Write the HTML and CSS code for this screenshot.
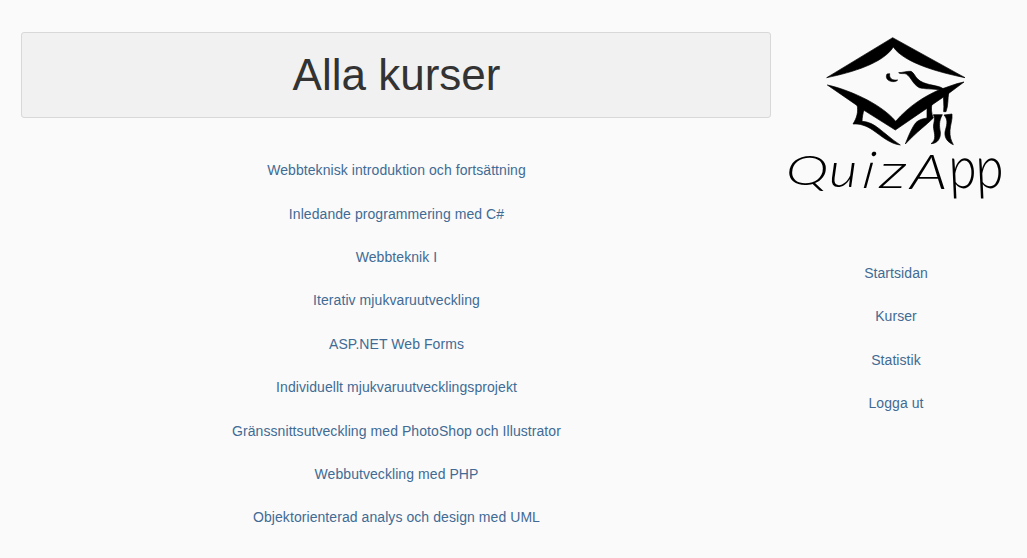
FILE: index.html
```html
<!DOCTYPE html>
<html lang="sv">
<head>
<meta charset="utf-8">
<title>QuizApp – Alla kurser</title>
<link rel="stylesheet" href="styles.css">
</head>
<body>
<div class="page">
  <main class="content">
    <header class="panel"><h1 class="title">Alla kurser</h1></header>
    <ul class="links courses">
      <li><a href="#">Webbteknisk introduktion och fortsättning</a></li>
      <li><a href="#">Inledande programmering med C#</a></li>
      <li><a href="#">Webbteknik I</a></li>
      <li><a href="#">Iterativ mjukvaruutveckling</a></li>
      <li><a href="#">ASP.NET Web Forms</a></li>
      <li><a href="#">Individuellt mjukvaruutvecklingsprojekt</a></li>
      <li><a href="#">Gränssnittsutveckling med PhotoShop och Illustrator</a></li>
      <li><a href="#">Webbutveckling med PHP</a></li>
      <li><a href="#">Objektorienterad analys och design med UML</a></li>
    </ul>
  </main>
  <aside class="sidebar">
    <svg class="logo" viewBox="0 0 720 570" role="img" aria-label="QuizApp">
      <g class="cap">
        <!-- top edges of the board -->
        <path d="M140 158 L338 38 L555 158 C480 143 372 114 340 66 C310 114 218 142 140 158Z"/>
        <!-- lower edges of the board -->
        <path d="M142 180 C195 191 300 232 347 289 C388 242 430 216 478 194 C500 188 524 176 552 171 L505 206 L346 315 L252 256 L232 242Z"/>
        <!-- button and cord -->
        <path d="M321 147 L329 146 C327 160 336 167 353 165 C349 170 340 171 333 169 C321 166 316 157 321 147Z"/>
        <path d="M356 143 C369 143 380 138 393 139 C403 144 404 154 414 163 C432 180 463 179 485 188 L506 204 C503 222 505 242 498 260 L491 260 C493 240 489 220 491 206 L477 194 C458 191 434 193 418 188 C398 178 394 157 379 147 C371 144 361 148 356 143Z"/>
        <!-- cap sides -->
        <path d="M231 238 L253 252 C248 266 247 277 246 289 C287 291 305 323 361 360 C330 357 303 332 278 315 C257 301 240 296 219 297 C230 279 236 262 231 238Z"/>
        <path d="M441 247 L456 236 C453 249 454 266 460 279 C437 302 413 318 376 357 C386 331 393 315 403 299 C412 285 425 282 441 279Z"/>
        <!-- tassel -->
        <path d="M460 269 L487 269 C476 289 478 303 481 321 C483 340 472 356 453 356 C470 345 463 326 461 311 C458 296 468 284 460 269Z"/>
        <path d="M492 270 L516 267 C518 283 511 299 510 316 C509 335 513 346 520 359 C503 352 493 339 495 321 C499 303 507 286 492 270Z"/>
      </g>
      <!-- each letter has its own width and height -->
      <g class="wordmark">
        <text transform="translate(17 480) scale(1.3 .92)">Q</text>
        <text transform="translate(146 487) scale(1.25 1.06)">u</text>
        <text transform="translate(244 488) skewX(-8) scale(1.2 1.14)">i</text>
        <text transform="translate(297 488) scale(1.5 1.06)">z</text>
        <text transform="translate(390 491) scale(1.38 1.04)">A</text>
        <text transform="translate(514 490) skewX(9) scale(1.22 1.32)">p</text>
        <text transform="translate(595 488) skewX(9) scale(1.22 1.32)">p</text>
      </g>
    </svg>
    <ul class="links menu">
      <li><a href="#">Startsidan</a></li>
      <li><a href="#">Kurser</a></li>
      <li><a href="#">Statistik</a></li>
      <li><a href="#">Logga ut</a></li>
    </ul>
  </aside>
</div>
</body>
</html>
```
FILE: styles.css
```css
* { box-sizing: border-box; }
body {
  margin: 0;
  height: 558px;
  overflow: hidden;
  background: #fafafa;
  font-family: "Liberation Sans", Arial, sans-serif;
  font-size: 14px;
}
.page {
  display: grid;
  grid-template-columns: 750px 240px;
  column-gap: 9px;
  padding-left: 21px;
}
.content { padding-top: 32px; }
.panel {
  height: 86px;
  padding: 11px 0 0 1px;
  background: #f1f1f1;
  border: 1px solid #d8d8d8;
  border-radius: 3px;
}
.title {
  margin: 0;
  color: #333;
  font-size: 44px;
  font-weight: 400;
  line-height: 62px;
  text-align: center;
}
.links {
  margin: 0;
  padding: 0;
  list-style: none;
  line-height: 43.4px;
  letter-spacing: .07px;
  text-align: center;
}
.courses { padding: 31.2px 0 0 1px; }
.links a { color: #416b94; text-decoration: none; }
.sidebar { padding-top: 25px; }
.logo { display: block; width: 240px; height: 190px; }
.cap { stroke: #000; stroke-width: 2; }
.menu { padding: 37px 8px 0 0; }
.wordmark {
  font-family: Lato, sans-serif;
  font-size: 134px;
  font-weight: 300;
  font-style: italic;
}
```
